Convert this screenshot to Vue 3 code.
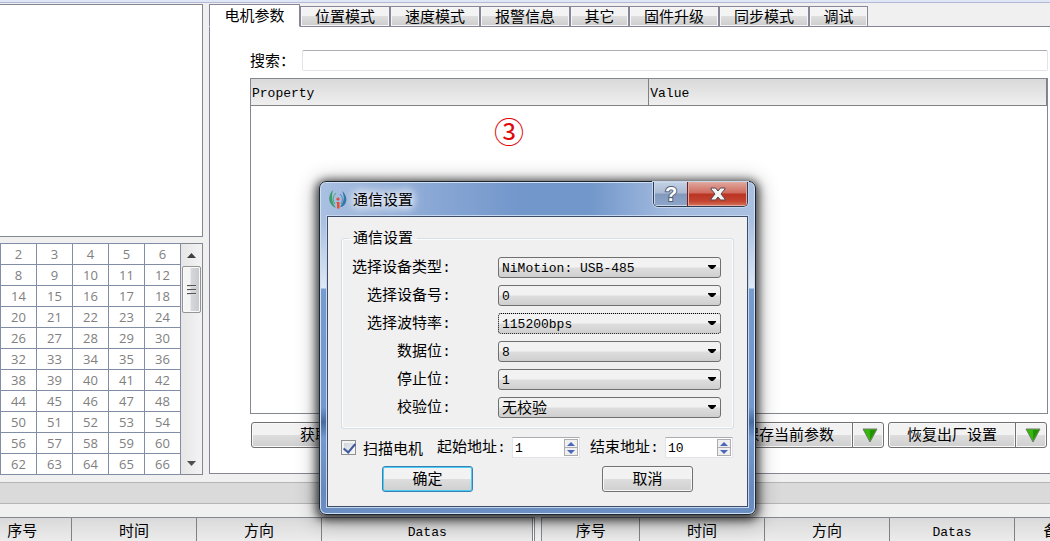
<script setup>
import { ref, reactive } from 'vue'

const tabs = [
  { name: '电机参数', size: 'first' },
  { name: '位置模式', size: 'wide' },
  { name: '速度模式', size: 'wide' },
  { name: '报警信息', size: 'wide' },
  { name: '其它', size: 'narrow' },
  { name: '固件升级', size: 'wide' },
  { name: '同步模式', size: 'wide' },
  { name: '调试', size: 'narrow' },
]
const activeTab = ref('电机参数')
const search = ref('')

const rows = Array.from({ length: 11 }, (_, r) =>
  Array.from({ length: 5 }, (_, c) => r * 6 + c + 2)
)

const fields = reactive([
  { id: 'device-type', label: '选择设备类型:', value: 'NiMotion: USB-485' },
  { id: 'device-no', label: '选择设备号:', value: '0' },
  { id: 'baud', label: '选择波特率:', value: '115200bps', focus: true },
  { id: 'data-bits', label: '数据位:', value: '8' },
  { id: 'stop-bits', label: '停止位:', value: '1' },
  { id: 'parity', label: '校验位:', value: '无校验', cjk: true },
])
const scan = ref(true)
const startAddr = ref(1)
const endAddr = ref(10)
</script>

<template>
  <div class="app">
    <div class="top-strip"></div>

    <main class="workspace">
      <aside class="side">
        <section class="tree"></section>
        <section class="stations">
          <table class="numbers">
            <tbody>
              <tr v-for="(row, i) in rows" :key="i">
                <td v-for="n in row" :key="n">{{ n }}</td>
              </tr>
            </tbody>
          </table>
          <div class="scrollbar">
            <button class="scroll-arrow" aria-label="上">
              <svg width="9" height="5" viewBox="0 0 9 5"><path d="M0 5 4.5 0 9 5z" fill="#404040" /></svg>
            </button>
            <div class="thumb"><i></i><i></i><i></i></div>
            <button class="scroll-arrow last" aria-label="下">
              <svg width="9" height="5" viewBox="0 0 9 5"><path d="M0 0H9L4.5 5z" fill="#505050" /></svg>
            </button>
          </div>
        </section>
      </aside>

      <section class="motor">
        <nav class="tabs">
          <button
            v-for="t in tabs"
            :key="t.name"
            class="tab"
            :class="[t.size, { active: t.name === activeTab }]"
            @click="activeTab = t.name"
          >{{ t.name }}</button>
          <span class="tab-rest"></span>
        </nav>
        <div class="pane">
          <div class="search">
            <label for="search">搜索：</label>
            <input id="search" v-model="search" type="text" />
          </div>
          <div class="props">
            <table class="props-table">
              <thead>
                <tr><th>Property</th><th>Value</th></tr>
              </thead>
            </table>
            <span class="marker">③</span>
          </div>
          <div class="actions">
            <button class="btn action fetch">获取参数</button>
            <span class="spacer"></span>
            <div class="split">
              <button class="btn action main">保存当前参数</button>
              <button class="btn action drop" aria-label="保存">
                <svg width="16" height="15" viewBox="0 0 16 15"><path d="M1 1H15L8 14z" fill="#35b80c" stroke="#6c7c68" /><path d="M8 2H14L8 12z" fill="#229200" /></svg>
              </button>
            </div>
            <div class="split">
              <button class="btn action main">恢复出厂设置</button>
              <button class="btn action drop" aria-label="恢复">
                <svg width="16" height="15" viewBox="0 0 16 15"><path d="M1 1H15L8 14z" fill="#35b80c" stroke="#6c7c68" /><path d="M8 2H14L8 12z" fill="#229200" /></svg>
              </button>
            </div>
          </div>
        </div>
      </section>
    </main>

    <div class="divider"></div>

    <footer class="logs">
      <div class="log sent">
        <table>
          <thead><tr><th class="no">序号</th><th class="mid">时间</th><th class="mid">方向</th><th>Datas</th></tr></thead>
        </table>
      </div>
      <div class="log received">
        <table>
          <thead><tr><th class="no">序号</th><th class="mid">时间</th><th class="mid">方向</th><th class="mid latin">Datas</th><th class="note">备注</th></tr></thead>
        </table>
      </div>
    </footer>

    <div class="dialog" role="dialog" aria-label="通信设置">
      <header class="title">
        <svg class="logo" width="20" height="20" viewBox="0 0 20 20" fill="none">
          <path d="M5 1C1 5 0 11 3 15C4 17 6 18 8 19C4 14 3 8 5 1z" fill="#3c9b6c" />
          <path d="M8 4C5 7 4 11 7 15" stroke="#4ca477" stroke-width="1" />
          <path d="M14 2C18 5 20 11 17 15C16 17 14 18 12 18C16 13 17 8 14 2z" fill="#3274a6" />
          <path d="M12 5C15 8 15 11 13 15" stroke="#4688b0" stroke-width="1" />
          <circle cx="10" cy="10" r="1.6" fill="#e24a32" />
          <path d="M8.500 13H11.500V19.500H9V14H8.500z" fill="#ee4a30" />
        </svg>
        <h1>通信设置</h1>
        <div class="caption">
          <button class="help" aria-label="帮助">?</button>
          <button class="close" aria-label="关闭">
            <svg width="18" height="16" viewBox="0 0 18 16">
              <path d="M2 2H6.500L9 5 11.500 2H16V3L12 8 16 13V14H11.500L9 11 6.500 14H2V13L6 8 2 3z" fill="#f4f4f4" stroke="#53484f" stroke-width="1" />
            </svg>
          </button>
        </div>
      </header>
      <form class="client" @submit.prevent>
        <fieldset>
          <legend>通信设置</legend>
          <div v-for="f in fields" :key="f.id" class="field">
            <label :for="f.id">{{ f.label }}</label>
            <div class="combo" :class="{ focus: f.focus, cjk: f.cjk }">
              <select :id="f.id" v-model="f.value">
                <option>{{ f.value }}</option>
              </select>
              <svg width="8" height="5" viewBox="0 0 8 5"><path d="M0 0H8V1L5 4H3L0 1z" fill="#000" /></svg>
            </div>
          </div>
        </fieldset>
        <div class="scan">
          <label class="check"><input v-model="scan" type="checkbox" /><span>扫描电机</span></label>
          <label class="start" for="start">起始地址:</label>
          <div class="spin">
            <input id="start" v-model="startAddr" type="text" />
            <div class="steps">
              <button type="button" aria-label="加" @click="startAddr++"><svg width="8" height="4" viewBox="0 0 8 4"><path d="M0 4 4 0 8 4z" fill="#4c66ba" /></svg></button>
              <button type="button" aria-label="减" @click="startAddr--"><svg width="8" height="4" viewBox="0 0 8 4"><path d="M0 0H8L4 4z" fill="#4c66ba" /></svg></button>
            </div>
          </div>
          <label class="end" for="end">结束地址:</label>
          <div class="spin">
            <input id="end" v-model="endAddr" type="text" />
            <div class="steps">
              <button type="button" aria-label="加" @click="endAddr++"><svg width="8" height="4" viewBox="0 0 8 4"><path d="M0 4 4 0 8 4z" fill="#4c66ba" /></svg></button>
              <button type="button" aria-label="减" @click="endAddr--"><svg width="8" height="4" viewBox="0 0 8 4"><path d="M0 0H8L4 4z" fill="#4c66ba" /></svg></button>
            </div>
          </div>
        </div>
        <div class="confirm">
          <button class="btn ok" type="submit">确定</button>
          <button class="btn" type="button">取消</button>
        </div>
      </form>
    </div>
  </div>
</template>

<style>
html, body { background: #f0f0f0; overflow: hidden; }
</style>

<style scoped>
* { box-sizing: border-box; }
.app {
  position: relative;
  display: flex;
  flex-direction: column;
  height: 100vh;
  overflow: hidden;
  background: #f0f0f0;
  color: #000;
  font: 15px/20px "Noto Sans CJK SC", sans-serif;
}
button, input, select { font: inherit; color: inherit; margin: 0; padding: 0; border-radius: 0; }
table { border-collapse: collapse; }
svg { display: block; flex: none; }

.top-strip { height: 3px; flex: none; background: #dfe7f6; border-bottom: 1px solid #b3b8d4; }
.workspace { flex: 1; min-height: 0; display: flex; gap: 6px; padding-top: 1px; }

.side { width: 203px; flex: none; display: flex; flex-direction: column; gap: 6px; }
.tree { flex: 1; background: #fff; border: solid #828790; border-width: 1px 1px 1px 0; }
.stations { display: flex; border-right: 1px solid #828790; }
.numbers { table-layout: fixed; width: 181px; background: #fff; }
.numbers td {
  height: 21px;
  padding: 0;
  border: 1px solid #828ea5;
  color: #808080;
  text-align: center;
  font: 13px/18px "Open Sans", "Noto Sans", sans-serif;
}
.scrollbar {
  flex: 1;
  display: flex;
  flex-direction: column;
  align-items: stretch;
  padding: 0 1px;
  background: linear-gradient(90deg, #e6e6e6, #f3f3f3);
  border: solid #828790;
  border-width: 1px 0;
}
.scroll-arrow { display: flex; justify-content: center; align-items: center; height: 22px; border: 0; background: none; }
.scroll-arrow.last { margin-top: auto; }
.thumb {
  height: 47px;
  display: flex;
  flex-direction: column;
  align-items: center;
  justify-content: center;
  gap: 2px;
  border: 1px solid #949494;
  border-radius: 2px;
  background: linear-gradient(90deg, #f5f5f5 0 40%, #d5d7da 50%, #c6c8cc);
  box-shadow: inset 0 0 0 1px #fafafa;
}
.thumb i { width: 9px; height: 2px; background: #555; border-bottom: 1px solid #ddd; }

.motor { flex: 1; min-width: 0; display: flex; flex-direction: column; margin-bottom: 1px; }
.tabs { display: flex; align-items: flex-end; height: 23px; flex: none; }
.tab {
  height: 21px;
  padding-bottom: 2px;
  border: 1px solid #868696;
  background: linear-gradient(#f3f3f3 0 45%, #dedede 50%, #cdcdcd);
  box-shadow: inset 0 0 0 1px #f6f6f6;
  line-height: 17px;
}
.tab.wide { width: 90px; }
.tab.narrow { width: 59px; }
.tab.active { width: 91px; height: 23px; background: #fff; border-bottom-color: #fff; box-shadow: none; }
.tab-rest { flex: 1; border-bottom: 1px solid #868696; }
.pane {
  flex: 1;
  display: flex;
  flex-direction: column;
  padding: 23px 2px 25px 40px;
  background: #fff;
  border: solid #868696;
  border-width: 0 0 1px 1px;
}
.search { display: flex; align-items: center; height: 21px; }
.search label { width: 52px; padding-bottom: 2px; }
.search input { flex: 1; height: 21px; border: 1px solid #e2e3ea; border-top-color: #abadb3; border-radius: 2px; outline: 0; background: #fff; }
.props { position: relative; flex: 1; margin-top: 7px; border: 1px solid #828790; }
.props-table { width: 100%; table-layout: fixed; }
.props-table th {
  height: 26px;
  padding: 5px 1px 0;
  background: linear-gradient(#d9d9d9, #efefef);
  border-bottom: 1px solid #818181;
  border-right: 1px solid #818181;
  text-align: left;
  font: 13px/20px "Liberation Mono", monospace;
}
.marker { position: absolute; left: 243px; top: 31px; color: #e00808; font-size: 30px; line-height: 40px; }

.btn {
  width: 91px;
  height: 26px;
  padding-bottom: 2px;
  border: 1px solid #707070;
  border-radius: 3px;
  background: linear-gradient(#f2f2f2 0 48%, #dddddd 52%, #cfcfcf);
  box-shadow: inset 0 0 0 1px #f8f8f8;
  line-height: 22px;
}
.actions { display: flex; gap: 4px; margin-top: 8px; padding: 0 1px; }
.spacer { flex: 1; }
.fetch { width: 158px; }
.split { display: flex; }
.main { width: 128px; border-radius: 3px 0 0 3px; }
.drop { display: flex; align-items: center; justify-content: center; width: 32px; margin-left: -1px; padding: 0 0 0 3px; border-radius: 0 3px 3px 0; }

.divider { height: 22px; flex: none; margin-top: 7px; background: #dadada; border: solid #b5b5b5; border-width: 1px 0; }
.logs { display: flex; gap: 6px; height: 24px; flex: none; margin-top: 13px; overflow: hidden; }
.log { border-top: 1px solid #828790; background: #fff; overflow: hidden; }
.log table { table-layout: fixed; }
.log th {
  height: 27px;
  padding: 2px 0 0 1px;
  background: linear-gradient(#d9d9d9, #efefef);
  border-right: 1px solid #818181;
  font: 13px/25px "Liberation Mono", "Noto Sans CJK SC", monospace;
}
.log th.no, .log th.mid, .log th.note { font-size: 15px; }
.log th.latin { font-size: 13px; }
.sent { width: 535px; flex: none; border-right: 1px solid #828790; }
.sent table { width: 560px; margin-left: -27px; }
.received { flex: 1; min-width: 0; border-left: 1px solid #828790; }
.received table { width: 560px; }
.no { width: 98px; }
.received .no { width: 97px; }
.mid { width: 125px; }
.note { width: 88px; }

.dialog {
  position: absolute;
  left: 319px;
  top: 181px;
  width: 437px;
  padding: 0 7px 7px;
  border: 1px solid #1c2633;
  border-radius: 7px;
  background:
    linear-gradient(90deg, #a9c0e1, #85a4d3 30%, #7297cb 46%, #7297cb 62%, #a2bade 80%, #a9c0e1) top / 100% 35px no-repeat,
    linear-gradient(#a9c0e1, #a9c0e1 40px, #dfe8f4 106px, #779acf 107px, #7499ce 225px, #486a9f 240px, #7499ce 256px, #6889bd 310px, #6c90c4);
  box-shadow: inset 0 0 0 1px #d0dff0, 0 2px 9px 3px rgba(0, 0, 0, .65), 0 3px 20px 4px rgba(0, 0, 0, .3);
}
.title { display: flex; height: 34px; padding-left: 1px; }
.logo { margin-top: 7px; }
.title h1 {
  margin: 7px 0 0 5px;
  font: 15px/20px "Noto Sans CJK SC", sans-serif;
  text-shadow: 0 0 10px #fff, 0 0 10px #fff, 0 0 14px #fff;
}
.caption { display: flex; height: 25px; margin-left: auto; border: 1px solid #2e3d55; border-top: 0; border-radius: 0 0 5px 5px; overflow: hidden; box-shadow: 0 0 0 1px #c4d5eb; }
.caption button { display: flex; align-items: center; justify-content: center; border: 0; }
.help {
  width: 34px;
  background: linear-gradient(#c4d1e3 0, #a9bbd4 46%, #8299bd 50%, #8ea6c9);
  box-shadow: inset 0 0 0 1px #c9d8ea;
}
.caption .help {
  color: #fff;
  font: bold 20px/24px "Liberation Sans", sans-serif;
  -webkit-text-stroke: 2px #53607a;
  paint-order: stroke fill;
}
.close {
  width: 59px;
  background: linear-gradient(#e0a79f, #cf6b5d 46%, #bb3423 50%, #c34430 80%, #d8765d);
  box-shadow: inset 0 0 0 1px #e3aaa0, -1px 0 0 #701f1d;
}
.client { padding: 12px 13px 14px; background: #f0f0f0; border: 1px solid #3c4c69; box-shadow: 0 0 0 1px #c4d7ee; }
fieldset { margin: 0; padding: 10px 12px 10px 0; border: 1px solid #d5dfe5; border-radius: 3px; box-shadow: inset 0 0 0 1px #fafcfd; min-width: 0; }
legend { height: 18px; margin-left: 7px; padding: 0 4px; line-height: 16px; }
.field { display: flex; align-items: center; justify-content: space-between; height: 21px; }
.field + .field { margin-top: 7px; }
.field label, .start, .end { padding-top: 3px; font-family: "Liberation Mono", "Noto Sans CJK SC", monospace; }
.field label { width: 109px; text-align: right; white-space: nowrap; }
.combo { position: relative; width: 223px; height: 21px; }
.combo select {
  display: block;
  appearance: none;
  width: 100%;
  height: 21px;
  padding: 2px 20px 0 3px;
  border: 1px solid #707070;
  border-radius: 3px;
  outline: 0;
  background: linear-gradient(#f2f2f2 0 45%, #dddddd 55%, #cfcfcf);
  font: 13px/17px "Liberation Mono", monospace;
}
.combo.cjk select { padding: 0 20px 2px 3px; font: 15px/17px "Noto Sans CJK SC", sans-serif; }
.combo.focus select { border: 1px dotted #000; }
.combo svg { position: absolute; right: 5px; top: 8px; pointer-events: none; }
.scan { display: flex; align-items: center; height: 21px; margin-top: 8px; white-space: nowrap; }
.check { display: flex; align-items: center; gap: 7px; }
.check input {
  appearance: none;
  width: 15px;
  height: 15px;
  border: 1px solid #8e8f8f;
  background: linear-gradient(135deg, #c9cfd8, #f6f6f6);
  box-shadow: inset 0 0 0 2px #f4f4f4;
  position: relative;
}
.check input:checked::after {
  content: "";
  position: absolute;
  left: 4px;
  top: 0;
  width: 5px;
  height: 10px;
  border: solid #3f579e;
  border-width: 0 2px 2px 0;
  transform: rotate(40deg);
}
.start { width: 75px; margin-left: 14px; }
.end { width: 75px; margin-left: 10px; }
.spin { display: flex; align-items: center; width: 68px; height: 21px; padding-right: 1px; background: #fff; border: 1px solid #e2e3ea; border-top-color: #abadb3; }
.spin input { flex: 1; min-width: 0; width: 20px; height: 19px; padding: 2px 0 0 2px; border: 0; outline: 0; background: none; font: 13px/17px "Liberation Mono", monospace; }
.steps { display: flex; flex-direction: column; width: 14px; }
.steps button { display: flex; align-items: center; justify-content: center; height: 9px; border: 1px solid #adadad; background: #f0f0f0; }
.steps button + button { margin-top: -1px; }
.confirm { display: flex; gap: 129px; margin: 8px 0 0 41px; }
.ok { border-color: #3c7fb1; box-shadow: inset 0 0 0 1px #46d0f6; }
</style>
